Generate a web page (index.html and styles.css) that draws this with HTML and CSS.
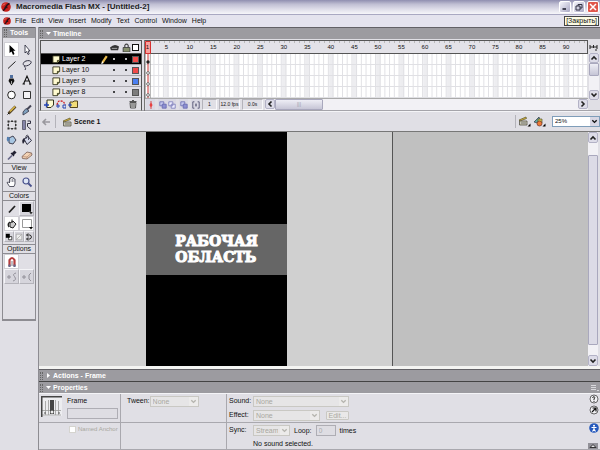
FILE: index.html
```
<!DOCTYPE html>
<html lang="en">
<head>
<meta charset="utf-8">
<title>Macromedia Flash MX - [Untitled-2]</title>
<link rel="stylesheet" href="styles.css">
</head>
<body>
<svg class="symbols" aria-hidden="true">
  <symbol id="logo" viewBox="0 0 10 10"><circle cx="5" cy="5" r="4.8" fill="#c81f1b"/><path d="M2 8.500C5 8 4 2.500 8.500 1.500M3.500 5.500H6.500" fill="none" stroke="#2a1018" stroke-width="1.600"/><path d="M2 3.500 4 1.500" stroke="#f08878"/></symbol>
  <symbol id="chev" viewBox="0 0 8 8"><path d="M1.500 2.500 4 5 6.500 2.500" fill="none" stroke="currentColor" stroke-width="1.600"/></symbol>
  <symbol id="page" viewBox="0 0 10 10"><path d="M1 1H8.500V6L6 8.500H1Z" fill="#fffbd0" stroke="#33331e"/><path d="M8.500 6H6V8.500" fill="#b8b860" stroke="#33331e"/></symbol>
  <symbol id="clap" viewBox="0 0 10 10"><path d="M1 4 8 1 8.500 2.500 2 5Z" fill="#e0b93c" stroke="#56532c" stroke-width=".7"/><path d="M1.500 5H9V9H1.500Z" fill="#c8c7b2" stroke="#55534a" stroke-width=".8"/><path d="M3 7H8" stroke="#777"/></symbol>
  <symbol id="squares" viewBox="0 0 10 10"><path d="M1 1H6V6H1Z" fill="#c6c9ef" stroke="#6668ae"/><path d="M4 4H9V9H4Z" fill="#8d90d2" stroke="#6668ae"/></symbol>
</svg>

<header class="titlebar">
  <svg class="i10"><use href="#logo"/></svg>
  <h1>Macromedia Flash MX - [Untitled-2]</h1>
  <div class="winbuttons">
    <button aria-label="Minimize"><svg viewBox="0 0 10 10"><path d="M2.500 7H6" stroke="#223" stroke-width="1.600"/></svg></button>
    <button aria-label="Restore"><svg viewBox="0 0 10 10"><path d="M4 4V2.500H8V6H6M2 4H6V8H2Z" fill="none" stroke="#334"/></svg></button>
    <button class="close" aria-label="Close"><svg viewBox="0 0 10 10"><path d="M2 2 8 8M8 2 2 8" stroke="#fff" stroke-width="1.500"/></svg></button>
  </div>
</header>
<nav class="menubar">
  <svg class="i8"><use href="#logo"/></svg>
  <button>File</button><button>Edit</button><button>View</button><button>Insert</button><button>Modify</button><button>Text</button><button>Control</button><button>Window</button><button>Help</button>
  <span class="tooltip" role="tooltip">[Закрыть]</span>
</nav>

<div class="app">
  <aside class="tools">
    <div class="toolbox">
      <h2 class="bar"><span class="grip"></span>Tools</h2>
      <div class="toolgrid">
        <button class="on" aria-label="Arrow"><svg viewBox="0 0 12 12"><path d="M3.500 1V9L5.500 7.500 7 11 8.500 10 7.200 6.800H9.500Z" fill="#000"/></svg></button>
        <button aria-label="Subselection"><svg viewBox="0 0 12 12"><path d="M4 1V9L5.500 7.500 7 10.500 8.200 10 7 7H9Z" fill="#fff" stroke="#223" stroke-width=".8"/></svg></button>
        <button aria-label="Line"><svg viewBox="0 0 12 12"><path d="M2 9.500 9.500 2.500" stroke="#222"/></svg></button>
        <button aria-label="Lasso"><svg viewBox="0 0 12 12"><path d="M4 7C1 6 2 3 5 2 8 1 11 2 10 4 9 6 6 7 4 7 2 8 6 8 4 11" fill="none" stroke="#334"/></svg></button>
        <button aria-label="Pen"><svg viewBox="0 0 12 12"><path d="M4 1H7V4H4Z" fill="#5070a0"/><path d="M3.500 4.500H7.500L8.500 7 5.500 11.500 2.500 7Z" fill="#111"/><path d="M5.500 7V10" stroke="#ccc" stroke-width=".8"/></svg></button>
        <button aria-label="Text"><svg viewBox="0 0 12 12"><path d="M2.500 10 6 2 9.500 10M4 7H8M1.500 10H4M8 10H10.500" fill="none" stroke="#111" stroke-width="1.100"/></svg></button>
        <button aria-label="Oval"><svg viewBox="0 0 12 12"><circle cx="5.500" cy="6" r="3.800" fill="#fff" stroke="#222"/></svg></button>
        <button aria-label="Rectangle"><svg viewBox="0 0 12 12"><path d="M2.500 2.500H9.500V9.500H2.500Z" fill="#f3f2f5" stroke="#333"/></svg></button>
        <button aria-label="Pencil"><svg viewBox="0 0 12 12"><path d="M2.500 9.500 9.500 2.500" stroke="#55462a" stroke-width="2.600"/><path d="M4 7.500 9 2.500" stroke="#e6c044" stroke-width="1.200"/><path d="M1.500 10.500 3 9" stroke="#111"/></svg></button>
        <button aria-label="Brush"><svg viewBox="0 0 12 12"><path d="M6 5.500 10 1.500" stroke="#445" stroke-width="2"/><path d="M2 8 5 4.500 8 7 4.500 9.500 2 11Z" fill="#7fa0bd" stroke="#334" stroke-width=".8"/></svg></button>
        <button aria-label="Free Transform"><svg viewBox="0 0 12 12"><path d="M2.500 2.500H9.500V9.500H2.500Z" fill="none" stroke="#777" stroke-dasharray="1 1"/><path d="M1.500 1.500h2v2h-2zM5 1.500h2v1.500h-2zM8.500 1.500h2v2h-2zM1.500 5h1.500v2h-1.500zM9 5h1.500v2H9zM1.500 8.500h2v2h-2zM5 9h2v1.500H5zM8.500 8.500h2v2h-2z" fill="#333"/></svg></button>
        <button aria-label="Fill Transform"><svg viewBox="0 0 12 12"><path d="M1.500 1.500H4.500V10.500H1.500Z" fill="#8484a8" stroke="#445" stroke-width=".7"/><path d="M6.500 2H9.500V4.500H6.500V7.500L10 10.500" fill="none" stroke="#334"/></svg></button>
        <button aria-label="Ink Bottle"><svg viewBox="0 0 12 12"><path d="M3 4 7 2 10 6 7 10 3 9Z" fill="#a8c6e2" stroke="#445"/><path d="M1 3Q3 2 4 5L2 8Q0 6 1 3" fill="#547fb0"/></svg></button>
        <button aria-label="Paint Bucket"><svg viewBox="0 0 12 12"><path d="M3 5 7 2.500 10.500 6.500 6 10.500Z" fill="#d4d8ea" stroke="#334"/><path d="M5 5V2Q6 0 7.500 2V6" fill="none" stroke="#334" stroke-width=".8"/><path d="M3 4Q0 6 2 10L4 7Z" fill="#223"/></svg></button>
        <button aria-label="Eyedropper"><svg viewBox="0 0 12 12"><path d="M6.500 5.500 9.500 2.500" stroke="#223" stroke-width="3"/><path d="M5 4 8 7" stroke="#223" stroke-width="1.200"/><path d="M2 10.500 6 6.500" stroke="#668" stroke-width="1.700"/></svg></button>
        <button aria-label="Eraser"><svg viewBox="0 0 12 12"><path d="M1 7.500 6 3 10.500 4 11 6 6 10 1.500 9.500Z" fill="#f3d2b4" stroke="#775c52" stroke-width=".8"/><path d="M1 7.500 6 8 10.500 4M6 8V10" fill="none" stroke="#a57b66" stroke-width=".6"/></svg></button>
      </div>
      <h3>View</h3>
      <div class="toolgrid tall">
        <button aria-label="Hand"><svg viewBox="0 0 12 12"><path d="M3.500 10.500 1 6.500 2.500 6 3.500 7V2.500H4.800V1.500H6.200V2H7.600V3H9V8L8 10.500Z" fill="#fff" stroke="#334" stroke-width=".8"/><path d="M5 3V6M6.500 3V6M8 4V6" stroke="#556" stroke-width=".6"/></svg></button>
        <button aria-label="Zoom"><svg viewBox="0 0 12 12"><circle cx="5" cy="5" r="3" fill="#dfe7f6" stroke="#48508c" stroke-width="1.200"/><path d="M7.500 7.500 10.500 10.500" stroke="#48508c" stroke-width="1.800"/></svg></button>
      </div>
      <h3>Colors</h3>
      <div class="toolgrid">
        <button aria-label="Stroke"><svg viewBox="0 0 12 12"><path d="M3 9.500 9 3" stroke="#222" stroke-width="1.800"/></svg></button>
        <button class="raised" aria-label="Stroke color"><svg viewBox="0 0 12 12"><path d="M1 1H10V9H1Z" fill="#000"/><path d="M8 9H12L10 11.500Z" fill="#000" stroke="#ddd" stroke-width=".4"/></svg></button>
        <button class="on" aria-label="Fill"><svg viewBox="0 0 12 12"><path d="M4 5 7 3 10 6 7 10 4 9ZM6 5V1.500" fill="#ccc" stroke="#222"/><path d="M4 4Q1 6 3 9" fill="none" stroke="#222" stroke-width="1.400"/></svg></button>
        <button class="on" aria-label="Fill color"><svg viewBox="0 0 12 12"><path d="M1.500 1.500H10.500V9.500H1.500Z" fill="#fff" stroke="#999"/><path d="M8 9H12L10 11.500Z" fill="#000"/></svg></button>
      </div>
      <div class="toolgrid three">
        <button class="raised" aria-label="Black and white"><svg viewBox="0 0 10 10"><path d="M4.500 4.500H8.500V8.500H4.500Z" fill="#fff" stroke="#222"/><path d="M1 1H6V6H1Z" fill="#000"/></svg></button>
        <button class="raised" aria-label="No color"><svg viewBox="0 0 10 10"><path d="M1.500 1.500H8.500V8.500H1.500ZM2 8 8 2" fill="#eee" stroke="#999" stroke-width=".8"/></svg></button>
        <button class="raised" aria-label="Swap colors"><svg viewBox="0 0 10 10"><path d="M2 2.500H6Q8 3 8 5 8 7 6 7.500H2M4 .5 2 2.500 4 4.500M4 5.500 2 7.500 4 9.500" fill="none" stroke="#222" stroke-width="1.200"/></svg></button>
      </div>
      <h3>Options</h3>
      <div class="toolgrid">
        <button class="on" aria-label="Snap to objects"><svg viewBox="0 0 12 12"><path d="M3.500 10V4Q6 0 8.500 4V10" fill="none" stroke="#b43c3c" stroke-width="2.200"/><path d="M3.500 8.500V11M8.500 8.500V11" stroke="#668" stroke-width="2.200"/><path d="M6 5V10" stroke="#445" stroke-width=".7"/></svg></button>
        <span></span>
        <button class="raised" aria-label="Smooth"><svg viewBox="0 0 12 12"><path d="M1 6H5M3 4V8M10 2Q6 3 8.500 5.500 11 9 7 10" fill="none" stroke="#918f98"/></svg></button>
        <button class="raised" aria-label="Straighten"><svg viewBox="0 0 12 12"><path d="M1 6H5M3 4V8M10 2 8 4V8L10 10" fill="none" stroke="#918f98"/></svg></button>
      </div>
    </div>
  </aside>

  <main class="work">
    <h2 class="bar"><span class="grip"></span><span class="tri down"></span>Timeline</h2>
    <section class="timeline">
      <div class="layers">
        <div class="layer head">
          <span></span><span></span><span></span>
          <svg viewBox="0 0 10 8"><path d="M0 4Q5-1 10 3L9 7H1Z" fill="#333"/><path d="M2 5H8" stroke="#aaa"/></svg>
          <svg viewBox="0 0 8 8"><path d="M2.500 4V2Q4 0 5.500 2V4" fill="none" stroke="#444"/><path d="M1 4H7V8H1Z" fill="#87916d" stroke="#333" stroke-width=".7"/></svg>
          <i class="swatch outline"></i>
        </div>
        <div class="layer selected"><svg><use href="#page"/></svg><span>Layer 2</span><svg viewBox="0 0 8 8"><path d="M2 7 6 1" stroke="#e9bc4f" stroke-width="2"/><path d="M1.500 8 2.500 6" stroke="#fff"/></svg><b></b><b></b><i class="swatch red"></i></div>
        <div class="layer"><svg><use href="#page"/></svg><span>Layer 10</span><span></span><b></b><b></b><i class="swatch red"></i></div>
        <div class="layer"><svg><use href="#page"/></svg><span>Layer 9</span><span></span><b></b><b></b><i class="swatch blue"></i></div>
        <div class="layer"><svg><use href="#page"/></svg><span>Layer 8</span><span></span><b></b><b></b><i class="swatch gray"></i></div>
        <div class="layerfoot">
          <button aria-label="Insert layer"><svg viewBox="0 0 10 10"><path d="M3 1H9.500V6L7 8.500H3Z" fill="#fffbd0" stroke="#33331e"/><path d="M0 6H5M2.500 3.500V8.500" stroke="#2444b4" stroke-width="1.300"/></svg></button>
          <button aria-label="Add motion guide"><svg viewBox="0 0 10 10"><path d="M1 6Q2 1 5 2 8 2 9 6" fill="none" stroke="#d0242c" stroke-width="1.300" stroke-dasharray="2 1"/><path d="M0 7H4M2 5V9M7 6H10V9H7Z" fill="none" stroke="#2444b4"/></svg></button>
          <button aria-label="Insert layer folder"><svg viewBox="0 0 10 10"><path d="M2 3H5L6 2H9.500V8.500H2Z" fill="#f2dc78" stroke="#55451c"/><path d="M0 6H4M2 4V8" stroke="#2444b4"/></svg></button>
          <button class="end" aria-label="Delete layer"><svg viewBox="0 0 10 10"><path d="M2 3.500H8L7.500 9H2.500ZM1.500 2.500H8.500M4 1.500H6M4 4V8M6 4V8" fill="#ddd" stroke="#444" stroke-width=".9"/></svg></button>
        </div>
      </div>
      <div class="frames">
        <div class="playhead"><svg viewBox="0 0 6 57" preserveAspectRatio="none"><path d="M.5 13V57M5.500 13V57" stroke="#888" stroke-width=".6"/><path d="M.5 .5H5.500V12.500H.5Z" fill="#f8a09c" stroke="#d53030"/><path d="M3 13V57" stroke="#cf3434"/><circle cx="3" cy="21" r="1.700" fill="#222"/><g fill="#fff" stroke="#555" stroke-width=".8"><circle cx="3" cy="32" r="1.400"/><circle cx="3" cy="43" r="1.400"/><circle cx="3" cy="54" r="1.400"/></g></svg></div>
        <div class="ruler">
          <span class="first">1</span><span>5</span><span>10</span><span>15</span><span>20</span><span>25</span><span>30</span><span>35</span><span>40</span><span>45</span><span>50</span><span>55</span><span>60</span><span>65</span><span>70</span><span>75</span><span>80</span><span>85</span><span>90</span>
        </div>
        <svg class="cells" viewBox="0 0 94 44" preserveAspectRatio="none">
          <defs>
            <pattern id="fr" width="1" height="11" patternUnits="userSpaceOnUse"><path d="M.8 0H1V11H.8ZM0 10H1V11H0Z" fill="#e0e0e4"/></pattern>
            <pattern id="five" width="5" height="44" patternUnits="userSpaceOnUse"><rect x="4" width="1" height="44" fill="#ededf0"/></pattern>
          </defs>
          <rect width="94" height="44" fill="#fff"/><rect width="94" height="44" fill="url(#five)"/><rect width="94" height="44" fill="url(#fr)"/>
        </svg>
        <div class="framefoot">
          <button aria-label="Center frame"><svg viewBox="0 0 10 10"><path d="M5 0V10" stroke="#d42b2b"/><path d="M5 2 7 5 5 8 3 5Z" fill="#e84040"/></svg></button>
          <button class="gap" aria-label="Onion skin"><svg><use href="#squares"/></svg></button>
          <button aria-label="Onion skin outlines"><svg viewBox="0 0 10 10"><path d="M1 1H6V6H1ZM4 4H9V9H4Z" fill="#eef" stroke="#7779b8"/></svg></button>
          <button class="gap" aria-label="Edit multiple frames"><svg><use href="#squares"/></svg></button>
          <button class="gap" aria-label="Modify onion markers"><svg viewBox="0 0 10 10"><path d="M3 1H1V9H3M7 1H9V9H7M4 5H6M5 3V7" fill="none" stroke="#446"/></svg></button>
          <output class="num">1</output><output>12.0 fps</output><output>0.0s</output>
          <div class="hscroll"><button class="sb left" aria-label="Scroll left"><svg><use href="#chev"/></svg></button><span class="thumb">|||</span><button class="sb right" aria-label="Scroll right"><svg><use href="#chev"/></svg></button></div>
        </div>
      </div>
      <div class="vscroll">
        <button class="opt" aria-label="Frame view"><svg viewBox="0 0 10 10"><path d="M1 3V7M8 3V7M4.500 3V6M1 5H8M6 8H8" stroke="#222"/></svg></button>
        <button class="sb up" aria-label="Scroll up"><svg><use href="#chev"/></svg></button><span class="thumb"></span><button class="sb down" aria-label="Scroll down"><svg><use href="#chev"/></svg></button>
      </div>
    </section>

    <section class="scenebar">
      <button class="back" aria-label="Back"><svg viewBox="0 0 10 10"><path d="M9 5H2M5 2 2 5 5 8" fill="none" stroke="#99989e" stroke-width="1.600"/></svg></button>
      <span class="sep"></span>
      <svg class="i10"><use href="#clap"/></svg><strong>Scene 1</strong>
      <span class="sep end"></span>
      <button aria-label="Edit scene"><svg viewBox="0 0 13 11"><use href="#clap" width="10" height="10"/><path d="M12.500 7.500V10.500H9.500Z"/></svg></button>
      <button aria-label="Edit symbols"><svg viewBox="0 0 13 11"><path d="M1 6 6 1 8 8Z" fill="#5eaaa0" stroke="#334" stroke-width=".7"/><path d="M5 3H9V7H5Z" fill="#d3c34c" stroke="#553" stroke-width=".7"/><circle cx="6.500" cy="7.500" r="2.500" fill="#ee7a34" stroke="#633" stroke-width=".7"/><path d="M12.500 7.500V10.500H9.500Z"/></svg></button>
      <label class="drop zoom"><select aria-label="Zoom"><option>25%</option></select><svg><use href="#chev"/></svg></label>
    </section>

    <section class="stage">
      <div class="canvas">
        <div class="movie"><p>РАБОЧАЯ<br>ОБЛАСТЬ</p></div>
        <div class="outside"></div>
      </div>
      <div class="vscroll stagebar"><button class="sb up" aria-label="Scroll stage up"><svg><use href="#chev"/></svg></button><span class="thumb"></span><button class="sb down" aria-label="Scroll stage down"><svg><use href="#chev"/></svg></button></div>
    </section>

    <h2 class="bar"><span class="grip"></span><span class="tri"></span>Actions - Frame</h2>
    <h2 class="bar prop"><span class="grip"></span><span class="tri down"></span>Properties<svg class="menu" viewBox="0 0 8 8"><path d="M0 1.500H5M0 3.500H5M0 5.500H5M6 6.500H8" stroke="#e8e8ec" stroke-width=".8"/></svg></h2>
    <section class="properties">
      <div class="cell frame">
        <svg class="frameicon" viewBox="0 0 21 21"><path d="M1 1H21V20H1Z" fill="#ededf0"/><path d="M4.500 5V19M7.500 4V19M14.500 4V19M17.500 5V19M1 14.500H20M1 19H20" fill="none" stroke="#999" stroke-width=".8"/><path d="M.500 21V.5H21" fill="none" stroke="#444" stroke-width="2"/><path d="M9 4H13V18H9Z" fill="#444"/><circle cx="11" cy="16" r="1.500" fill="#eee"/><path d="M3 17H5M17 17H19" stroke="#555"/></svg>
        <div class="stack"><label for="fname">Frame</label><input id="fname" type="text"></div>
      </div>
      <div class="cell tween"><label for="tween">Tween:</label><span class="drop off"><select id="tween" disabled><option>None</option></select><svg><use href="#chev"/></svg></span></div>
      <div class="cell sound">
        <label for="snd">Sound:</label><div class="line"><span class="drop off wide"><select id="snd" disabled><option>None</option></select><svg><use href="#chev"/></svg></span></div>
        <label for="eff">Effect:</label><div class="line"><span class="drop off mid"><select id="eff" disabled><option>None</option></select><svg><use href="#chev"/></svg></span><button class="edit" disabled>Edit...</button></div>
      </div>
      <div class="cell side"><button aria-label="Help"><svg viewBox="0 0 10 10"><circle cx="5" cy="5" r="4" fill="#f2f2f5" stroke="#444" stroke-width=".8"/><path d="M3.600 4Q4 2.500 5 2.600 6.800 3 5 5V6M5 6.800V8" fill="none" stroke="#222"/></svg></button><button aria-label="Edit action script"><svg viewBox="0 0 10 10"><circle cx="5" cy="5" r="4" fill="#f2f2f5" stroke="#444" stroke-width=".8"/><path d="M3 7 6.500 3.500M3.500 3H7V6.500" fill="none" stroke="#111" stroke-width="1.200"/></svg></button></div>
      <div class="cell anchor"><label><input type="checkbox" disabled>Named Anchor</label></div>
      <div class="cell"></div>
      <div class="cell sync">
        <label for="sync">Sync:</label><div class="line"><span class="drop off small"><select id="sync" disabled><option>Stream</option></select><svg><use href="#chev"/></svg></span><label for="loop">Loop:</label><input id="loop" type="text" value="0" disabled><span>times</span></div>
        <span></span><span>No sound selected.</span>
      </div>
      <div class="cell side low"><button aria-label="Accessibility"><svg viewBox="0 0 10 10"><circle cx="5" cy="5" r="4.800" fill="#2458bc"/><circle cx="5" cy="2.800" r="1" fill="#fff"/><path d="M2.500 4.500H7.500M5 4V6M5 6 3.500 8.500M5 6 6.500 8.500" stroke="#fff" stroke-width="1.100"/></svg></button><button class="fold" aria-label="Collapse"><svg viewBox="0 0 10 6"><path d="M2 4.500H8L5 1.500Z" fill="#e8e8ec" stroke="#333"/></svg></button></div>
    </section>
  </main>
</div>
</body>
</html>
```
FILE: styles.css
```
* { box-sizing: border-box; }
body {
  margin: 0;
  min-height: 100vh;
  display: flex;
  flex-direction: column;
  background: #e0dfe5;
  color: #111;
  font: 7px/10px "Liberation Sans", sans-serif;
}
button, input, select, output { font: inherit; color: inherit; }
button { padding: 0; border: 0; background: none; display: flex; align-items: center; justify-content: center; }
h1, h2, h3, p { margin: 0; }
svg { display: block; flex: none; width: 10px; height: 10px; }
.symbols { position: absolute; width: 0; height: 0; }
.i10 { width: 10px; height: 10px; }
.i8 { width: 8px; height: 8px; }

.titlebar {
  display: flex;
  align-items: center;
  gap: 5px;
  height: 14px;
  padding: 0 1px;
  background: linear-gradient(#908fb0, #c0bfd3 30%, #dedde9 65%, #f6f6fa);
}
.titlebar h1 { flex: 1; font: bold 8px/14px "Liberation Sans", sans-serif; color: #222; }
.winbuttons { display: flex; gap: 2px; }
.winbuttons button { width: 12px; height: 12px; border: 1px solid #fff; border-radius: 2px; background: linear-gradient(135deg, #f4f4fa, #a9a8c4); }
.winbuttons .close { background: #e0574b; }

.menubar {
  position: relative;
  display: flex;
  align-items: center;
  gap: 5px;
  height: 13px;
  padding: 0 3px;
  border-top: 1px solid #a9a8c2;
  background: #e4e3ee;
}
.menubar > svg { margin-right: -1px; }
.tooltip { position: absolute; right: 1px; top: 1px; height: 10px; padding: 0 1px; border: 1px solid #444; background: #fcfbe3; line-height: 8px; }

.app { flex: 1; display: grid; grid-template-columns: 38px 1fr; }
.bar {
  display: flex;
  align-items: center;
  gap: 2px;
  height: 12px;
  padding: 0 1px;
  border-top: 1px solid #626166;
  background: #9c9ba0;
  color: #fff;
  font: bold 7px/10px "Liberation Sans", sans-serif;
}
.grip { width: 3px; height: 8px; border-left: 1px dotted #666; border-right: 1px dotted #666; }
.tri { width: 3px; height: 5px; margin: 0 1px 0 2px; background: #fff; clip-path: polygon(0 0, 100% 50%, 0 100%); }
.tri.down { width: 5px; height: 3px; margin: 0 0 0 1px; clip-path: polygon(0 0, 100% 0, 50% 100%); }

.tools { padding: 0 2px; border-top: 0; }
.toolbox { height: 294px; border: 1px solid #8d8c92; border-top: 0; border-bottom-width: 2px; }
.tools .bar { height: 11px; margin-bottom: 4px; padding: 0 1px; gap: 3px; }
.toolgrid { display: grid; grid-template-columns: 15px 15px; grid-auto-rows: 15px; justify-content: center; }
.toolgrid button { border: 1px solid transparent; }
.toolgrid svg { width: 12px; height: 12px; }
.toolgrid .on { background: #fff; border-color: #d0cfd5; }
.toolgrid .raised { border-color: #f4f4f7 #b4b3ba #b4b3ba #f4f4f7; background: #d6d5dc; }
.toolgrid.tall { grid-auto-rows: 17px; }
.toolgrid.three { grid-template-columns: repeat(3, 10px); grid-auto-rows: 11px; margin-bottom: 2px; }
.toolgrid.three svg { width: 8px; height: 8px; }
.toolbox h3 { height: 10px; margin-top: 1px; border-top: 1px solid #8d8c92; border-bottom: 1px solid #8d8c92; font: 7px/8px "Liberation Sans", sans-serif; text-align: center; }

.work { display: flex; flex-direction: column; min-width: 0; border-left: 1px solid #8d8c92; }
.timeline { display: grid; grid-template-columns: 104px 1fr 12px; height: 72px; padding: 1px 0 1px 1px; border-bottom: 1px solid #a5a4aa; }
.layers { margin-right: 2px; border: 1px solid #555; border-bottom-color: #aaa; }
.layer { display: grid; grid-template-columns: 9px 37px 9px 11px 9px 8px; gap: 1px; align-items: center; height: 11px; padding-left: 11px; border-bottom: 1px solid #a9a8ae; }
.layer.head { height: 13px; border-color: #555; }
.layer svg { width: 9px; height: 9px; }
.layer b { width: 2px; height: 2px; margin-left: 3px; border-radius: 50%; background: currentColor; }
.layer.selected { background: #000; color: #fff; }
.swatch { width: 7px; height: 7px; border: 1px solid #555; }
.outline { border-color: #111; background: #fff; }
.red { background: #f04a48; }
.blue { background: #4a7ff0; }
.gray { background: #7c7c7c; }
.layerfoot { display: flex; gap: 2px; height: 12px; padding: 0 3px; }
.layerfoot .end { margin-left: auto; }

.frames { position: relative; display: flex; flex-direction: column; min-width: 0; border-left: 1px solid #777; }
.ruler { display: grid; grid-template-columns: 4fr repeat(18, 5fr); height: 14px; border: solid #555; border-width: 1px 1px 1px 0; line-height: 12px; background: repeating-linear-gradient(90deg, transparent 0 4px, #bbb 4px 5px) top / 100% 2px no-repeat, #e3e2e8; }
.ruler span { width: 5px; display: flex; justify-content: center; font-size: 6px; }
.ruler .first { position: relative; z-index: 2; }
.cells { width: 100%; height: 44px; }
.playhead { position: absolute; z-index: 1; left: 0; top: 1px; }
.playhead svg { width: 6px; height: 57px; }
.framefoot { display: flex; align-items: center; height: 12px; padding-left: 1px; border-top: 1px solid #aaa; }
.framefoot svg { width: 8px; height: 8px; }
.framefoot > button { width: 9px; height: 11px; background: #d9d8e3; }
.framefoot .gap { margin-left: 3px; }
output { width: 21px; height: 11px; margin-left: 2px; border: 1px solid #b4b3ba; border-right-color: #f8f8fa; border-bottom-color: #f8f8fa; font-size: 5px; line-height: 9px; text-align: center; white-space: nowrap; }
output.num { width: 15px; }
.hscroll { flex: 1; display: flex; height: 11px; margin-left: 2px; background: #f2f1f5; }
.hscroll .thumb { width: 48px; text-align: center; font-size: 5px; line-height: 9px; color: #99a; }
.thumb { border: 1px solid #a9a8bd; border-radius: 1px; background: linear-gradient(#eeeef5, #c6c5d6); }
.sb { flex: none; width: 10px; height: 10px; border: 1px solid #b3b2c6; border-radius: 2px; background: #dddce8; color: #222; }
.sb svg { width: 8px; height: 8px; }
.sb.up svg { transform: rotate(180deg); }
.sb.left svg { transform: rotate(90deg); }
.sb.right svg { transform: rotate(-90deg); }
.sb.right { margin-left: auto; }
.vscroll { display: flex; flex-direction: column; width: 10px; background: #f2f1f5; }
.vscroll .opt { height: 13px; background: #e0dfe5; }
.vscroll .thumb { height: 13px; }
.vscroll .down { margin-top: auto; }
.timeline .vscroll { margin-left: 1px; padding-bottom: 11px; background-clip: content-box; }

.scenebar { display: flex; align-items: center; gap: 2px; height: 20px; padding-left: 1px; border-top: 1px solid #f4f4f7; }
.back { width: 12px; }
.sep { width: 1px; height: 13px; margin: 0 4px 0 1px; background: #b4b3ba; }
.sep.end { margin: 0 0 0 auto; }
.scenebar button svg { width: 13px; height: 11px; }
.drop { display: flex; align-items: center; height: 11px; border: 1px solid #c9c8c3; background: #e6e5e6; }
.drop select { flex: 1; min-width: 0; height: 9px; padding: 0 2px; border: 0; background: none; appearance: none; line-height: 9px; }
.drop svg { width: 9px; height: 9px; padding: 1px; background: #d8d7e4; }
.zoom { width: 48px; margin-left: 4px; border-color: #7f9db9; background: #fff; font-size: 6px; }
.scenebar .back svg { width: 10px; height: 10px; }
.off { color: #a9a8a0; }
.off select { opacity: 1; color: inherit; }
.off svg { background: #ecebea; color: #b5b4ae; }

.stage { flex: 1; display: flex; border-top: 1px solid #777; border-bottom: 3px solid #f4f4f2; }
.canvas { flex: 1; display: grid; grid-template-columns: 107fr 141fr 105fr 196fr; background: #d0d0d0; }
.movie { grid-column: 2; display: grid; grid-template-rows: 92fr 52fr 91fr; background: #000; }
.movie p { grid-row: 2; display: grid; place-content: center; background: #666; color: #fff; font: 900 14px/16px "DejaVu Serif", serif; -webkit-text-stroke: 1px #fff; }
.outside { grid-column: 4; border-left: 1px solid #555; background: #c0c0c0; }
.stagebar { width: 12px; padding-right: 2px; background-clip: content-box; }
.stagebar .sb { width: 10px; height: 11px; }
.stagebar .thumb { height: 190px; margin-top: 12px; background: #dcdbe6; }

.prop { border-top-color: #444; }
.menu { width: 8px; height: 8px; margin-left: auto; }
.properties { display: grid; grid-template-columns: 81px 106px 1fr 12px; grid-template-rows: 29px 27px; border-top: 1px solid #f4f4f7; }
.cell { border-bottom: 1px solid #a9a8ae; }
.cell:nth-child(2), .cell:nth-child(3), .cell:nth-child(6), .cell:nth-child(7) { border-left: 1px solid #a9a8ae; }
.frame { display: flex; gap: 5px; padding: 2px; }
.frameicon { width: 21px; height: 21px; }
.stack { flex: 1; display: flex; flex-direction: column; gap: 2px; }
input[type="text"] { width: 100%; height: 11px; padding: 0 2px; border: 1px solid #aeadb4; background: #dedde3; }
.tween { display: flex; gap: 2px; padding: 2px 6px; }
.tween .drop { width: 49px; margin-left: -2px; }
.sound, .sync { display: grid; grid-template-columns: 24px 1fr; align-content: start; row-gap: 3px; padding: 2px 2px 0; }
.line { display: flex; align-items: center; gap: 4px; }
.wide { width: 96px; }
.mid { width: 67px; }
.small { width: 37px; }
.edit { width: 23px; height: 9px; margin-left: 2px; border: 1px solid #c9c8c3; border-radius: 1px; color: #a9a8a0; background: #e9e8e8; }
.sync #loop { width: 20px; color: #aaa; }
.anchor { padding: 1px 0 0 30px; color: #a9a8a0; font-size: 6px; }
.anchor label { display: flex; align-items: center; gap: 2px; white-space: nowrap; }
.anchor input { flex: none; width: 7px; height: 7px; margin: 0; appearance: none; border: 1px solid #d5d4cf; background: #fff; }
.side { display: flex; flex-direction: column; gap: 1px; }
.low { justify-content: space-between; }
.fold { width: 10px; height: 6px; background: #929198; }
.fold svg { height: 6px; }
```
